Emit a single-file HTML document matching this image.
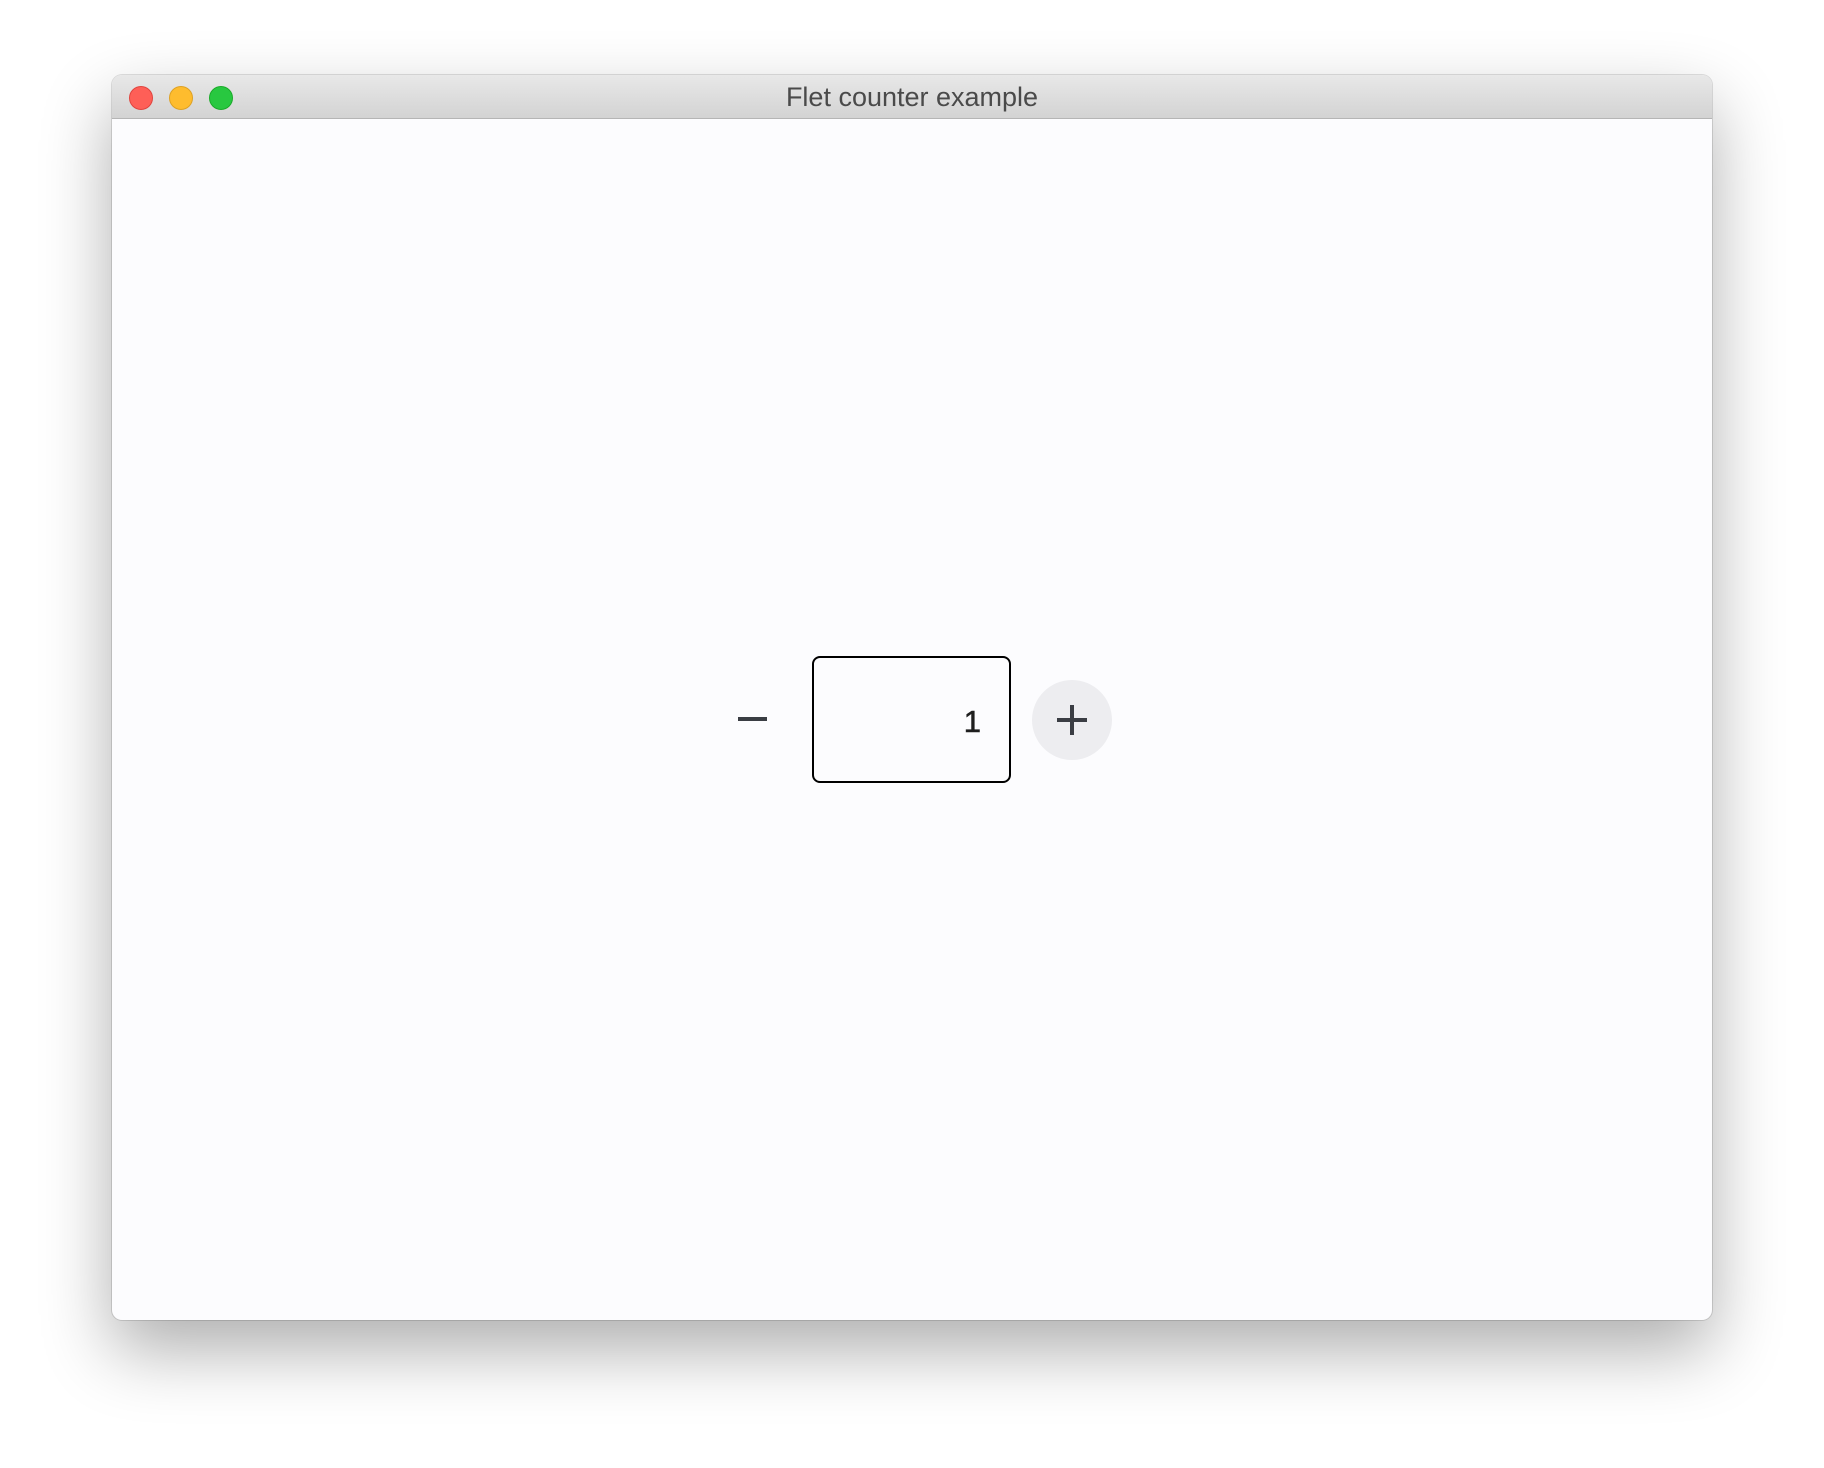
<!DOCTYPE html>
<html><head><style>
html,body{margin:0;padding:0;width:1824px;height:1468px;background:#fff;overflow:hidden;font-family:"Liberation Sans",sans-serif}
.win{position:absolute;left:112px;top:75px;width:1600px;height:1245px;border-radius:10px;background:#fcfcfe;box-shadow:0 30px 70px rgba(0,0,0,0.32),0 0 0 1px rgba(0,0,0,0.12);overflow:hidden}
.bar{position:absolute;left:0;top:0;width:100%;height:43px;background:linear-gradient(#e8e8e8,#d3d3d3);border-bottom:1px solid #b5b5b5}
.dot{position:absolute;top:11px;width:22px;height:22px;border-radius:50%}
.title{position:absolute;left:0;right:0;top:7px;text-align:center;font-size:27px;color:#4a4a4a}
.box{position:absolute;left:812px;top:656px;width:195px;height:123px;border:2px solid #000;border-radius:8px;box-sizing:content-box}
</style></head><body>
<div class="win">
<div class="bar">
<div class="dot" style="left:17px;background:#fe5f57;border:1px solid #e0443e"></div>
<div class="dot" style="left:57px;background:#febc2e;border:1px solid #dea123"></div>
<div class="dot" style="left:97px;background:#28c840;border:1px solid #1aab29"></div>
<div class="title">Flet counter example</div>
</div>
</div>
<div class="box"></div>
<div style="position:absolute;left:738px;top:717px;width:29px;height:4px;background:#3a3d43"></div>
<div style="position:absolute;left:940px;top:705px;width:41px;text-align:right;font-size:31px;color:#1e1e1e;line-height:34px;-webkit-text-stroke:0.6px #1e1e1e">1</div>
<div style="position:absolute;left:1032px;top:680px;width:80px;height:80px;border-radius:50%;background:#ededf0"></div>
<div style="position:absolute;left:1057px;top:718px;width:30px;height:4px;background:#3a3d43"></div>
<div style="position:absolute;left:1070px;top:705px;width:4px;height:30px;background:#3a3d43"></div>
</body></html>
